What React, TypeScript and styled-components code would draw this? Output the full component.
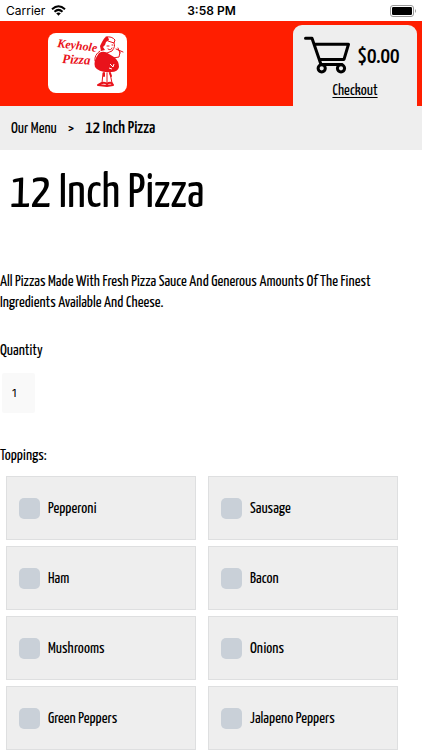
import React from "react";
import styled, { createGlobalStyle } from "styled-components";

const condensed = `"Yanone Kaffeesatz", "Liberation Sans Narrow", "Liberation Sans", sans-serif`;
const system = `Inter, "Liberation Sans", sans-serif`;

const GlobalStyle = createGlobalStyle`
  *, *::before, *::after { box-sizing: border-box; }
  html { scrollbar-width: none; }
  body {
    margin: 0;
    background: #fff;
    color: #000;
    font-family: ${condensed};
    font-size: 16px;
    line-height: 21px;
  }
`;

const StatusBar = styled.div`
  display: grid;
  grid-template-columns: 1fr auto 1fr;
  align-items: center;
  height: 21px;
  padding: 0 5px 0 6px;
  font-family: ${system};
  font-size: 12px;
`;

const Carrier = styled.span`
  display: flex;
  align-items: center;
  gap: 6px;
`;

const Clock = styled.time`
  font-weight: 600;
`;

const BatteryIcon = styled.svg`
  justify-self: end;
`;

const Header = styled.header`
  display: flex;
  justify-content: space-between;
  align-items: flex-end;
  height: 85px;
  padding: 0 5px 0 48px;
  background: #ff1e00;
`;

const LogoLink = styled.a`
  display: flex;
  align-self: center;
  margin-bottom: 1px;
`;

const CartTab = styled.section`
  display: flex;
  flex-direction: column;
  align-items: center;
  gap: 6px;
  width: 124px;
  height: 81px;
  padding: 11px 8px 0;
  border-radius: 9px 9px 0 0;
  background: #eee;
`;

const CartTotal = styled.div`
  display: flex;
  align-items: center;
  gap: 7px;
  padding-right: 6px;
  font-size: 23px;
  font-weight: 500;
`;

const Amount = styled.span`
  padding-top: 4px;
`;

const CheckoutLink = styled.a`
  color: inherit;
  text-underline-offset: 2px;
`;

const Breadcrumbs = styled.nav`
  display: flex;
  align-items: center;
  gap: 11px;
  height: 44px;
  padding: 0 11px;
  background: #eee;
`;

const Crumb = styled.a`
  color: inherit;
  text-decoration: none;
`;

const CurrentCrumb = styled.span`
  font-size: 18px;
  font-weight: 500;
`;

const Title = styled.h1`
  margin: 0;
  padding: 20px 10px 0;
  font-size: 49px;
  font-weight: 400;
  line-height: 48px;
`;

const Description = styled.p`
  margin: 0;
  padding: 53px 32px 0 0;
`;

const QuantityField = styled.label`
  display: flex;
  flex-direction: column;
  align-items: flex-start;
  gap: 12px;
  padding-top: 27px;
`;

const QuantityInput = styled.input`
  width: 33px;
  height: 40px;
  margin-left: 2px;
  padding: 0 10px;
  border: 0;
  border-radius: 2px;
  background: #f9f9f9;
  color: #000;
  font-family: ${system};
  font-size: 11px;
`;

const Toppings = styled.fieldset`
  margin: 0;
  padding: 32px 0 0;
  border: 0;
  min-width: 0;
`;

const Legend = styled.legend`
  float: left;
  width: 100%;
  margin-bottom: 10px;
  padding: 0;
`;

const ToppingGrid = styled.div`
  clear: both;
  display: grid;
  grid-template-columns: 1fr 1fr;
  gap: 6px 12px;
  padding: 0 24px 0 6px;
`;

const ToppingCard = styled.label`
  display: flex;
  align-items: center;
  gap: 8px;
  min-height: 64px;
  padding: 0 12px;
  border: 1px solid #dedfe0;
  background: #eee;
`;

const Checkbox = styled.input`
  appearance: none;
  flex: none;
  width: 21px;
  height: 21px;
  margin: 0;
  border-radius: 5px;
  background: #c9d0d8;
  &:checked { background: #ff1e00; }
`;

const toppings = [
  "Pepperoni", "Sausage", "Ham", "Bacon",
  "Mushrooms", "Onions", "Green Peppers", "Jalapeno Peppers",
];

function Wifi() {
  return (
    <svg width="15" height="11" viewBox="0 0 15 11" aria-hidden="true">
      <g fill="none" stroke="#000" strokeWidth="2">
        <path d="M1 4.2Q7.5 -1.8 14 4.2" />
        <path d="M3.5 6.8Q7.5 3 11.5 6.8" />
      </g>
      <path d="M5.2 8.3Q7.5 6.6 9.8 8.3L7.5 10.7Z" />
    </svg>
  );
}

function Battery() {
  return (
    <BatteryIcon width="27" height="12" viewBox="0 0 27 12" aria-hidden="true">
      <rect x=".5" y=".5" width="23" height="11" rx="2.5" fill="none" stroke="#999" />
      <rect x="2" y="2" width="20" height="8" rx="1.2" />
      <path d="M25 4Q27 6 25 8Z" fill="#999" />
    </BatteryIcon>
  );
}

function Logo() {
  return (
    <svg width="79" height="60" viewBox="0 0 79 60" role="img" aria-label="Keyhole Pizza">
      <rect width="79" height="60" rx="8" fill="#fff" />
      <g fill="#e9131b" fontFamily="'Liberation Serif', serif" fontStyle="italic" fontWeight="700">
        <text x="9" y="14" fontSize="12" transform="rotate(7 9 14)">Keyhole</text>
        <text x="14" y="30" fontSize="13" transform="rotate(3 14 30)">Pizza</text>
      </g>
      <path fill="#e9131b" d="M54 9Q57 3 60 4L61 7 58 9 57 12 55 14 57 17 53 18 52 13Z" />
      <path fill="#e9131b" d="M51 20Q56 17 61 21L66 24Q71 28 71 34Q70 39 63 39Q51 40 47 34Q45 28 51 20Z" />
      <g fill="none" stroke="#e9131b" strokeLinecap="round" strokeLinejoin="round">
        <path d="M58 4Q64 3 67 7L66 10 60 8M66 10Q68 13 64 18L59 20M59 13H61M64 12H65M60 16Q63 18 64 15M52 18Q46 22 47 28L51 29M65 25L71 24 72 19M68 16L75 19M70 15L72 20M55 40L54 50M59 40V50M62 40L64 50" />
        <path strokeWidth="2" d="M50 52Q56 48 59 51Q63 48 65 52L59 53ZM56 40V43M62 40L63 43" />
      </g>
      <path fill="none" stroke="#fff" d="M62 31L65 34 66 31M61 35L64 36" />
    </svg>
  );
}

function Cart() {
  return (
    <svg width="46" height="38" viewBox="0 0 46 38" fill="none" stroke="#000" strokeWidth="3" strokeLinecap="round" strokeLinejoin="round" aria-hidden="true">
      <path d="M1.5 2.3H8L17 28.5H38M10.5 8.3H44.5L40 23.4H16" />
      <circle cx="17.7" cy="32.3" r="3.6" />
      <circle cx="37" cy="32.3" r="3.6" />
    </svg>
  );
}

export default function App() {
  return (
    <>
      <GlobalStyle />
      <StatusBar>
        <Carrier>Carrier <Wifi /></Carrier>
        <Clock>3:58 PM</Clock>
        <Battery />
      </StatusBar>
      <Header>
        <LogoLink href="#"><Logo /></LogoLink>
        <CartTab>
          <CartTotal><Cart /><Amount>$0.00</Amount></CartTotal>
          <CheckoutLink href="#checkout">Checkout</CheckoutLink>
        </CartTab>
      </Header>
      <Breadcrumbs aria-label="Breadcrumb">
        <Crumb href="#menu">Our Menu</Crumb>
        <span>&gt;</span>
        <CurrentCrumb aria-current="page">12 Inch Pizza</CurrentCrumb>
      </Breadcrumbs>
      <main>
        <Title>12 Inch Pizza</Title>
        <Description>
          All Pizzas Made With Fresh Pizza Sauce And Generous Amounts Of The Finest Ingredients Available And Cheese.
        </Description>
        <QuantityField>
          Quantity
          <QuantityInput type="text" inputMode="numeric" defaultValue="1" />
        </QuantityField>
        <Toppings>
          <Legend>Toppings:</Legend>
          <ToppingGrid>
            {toppings.map((name) => (
              <ToppingCard key={name}>
                <Checkbox type="checkbox" name="toppings" value={name} />
                {name}
              </ToppingCard>
            ))}
          </ToppingGrid>
        </Toppings>
      </main>
    </>
  );
}
